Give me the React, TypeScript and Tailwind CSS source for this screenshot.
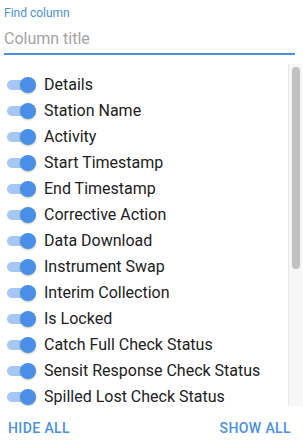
const columns = [
  'Details',
  'Station Name',
  'Activity',
  'Start Timestamp',
  'End Timestamp',
  'Corrective Action',
  'Data Download',
  'Instrument Swap',
  'Interim Collection',
  'Is Locked',
  'Catch Full Check Status',
  'Sensit Response Check Status',
  'Spilled Lost Check Status',
];

function Toggle() {
  return (
    <span className="relative flex h-[24px] w-[40px] shrink-0 items-center">
      <span className="ml-[7px] h-[10px] w-[26px] rounded-full bg-[#a5c7f2]" />
      <span className="absolute left-[20px] top-[4px] h-[16px] w-[16px] rounded-full bg-[#4a8fe7] shadow-[0_1px_2px_rgba(0,0,0,0.25)]" />
    </span>
  );
}

export default function App() {
  return (
    <div
      className="flex h-[444px] w-[303px] flex-col bg-white"
      style={{ fontFamily: 'Roboto, "Liberation Sans", sans-serif' }}
    >
      <div className="px-[4px] pt-[7px]">
        <div className="h-[12px] text-[12px] leading-[12px] text-[#4a90e2]">Find column</div>
        <div className="mt-[8px] w-[291px] border-b-2 border-[#4a90e2] pb-[2px]">
          <input
            placeholder="Column title"
            className="h-[23px] w-full bg-transparent text-[16px] leading-[23px] text-[#212121] outline-none placeholder:text-[#a3a3a3]"
          />
        </div>
      </div>

      <div className="mt-[9px] flex h-[342px] w-full">
        <div className="flex-1 overflow-hidden pt-[8px]">
          {columns.map((c) => (
            <label key={c} className="flex h-[26px] items-center">
              <Toggle />
              <span className="ml-[4px] whitespace-nowrap text-[16px] leading-[18px] text-[#212121]">{c}</span>
            </label>
          ))}
        </div>
        <div className="w-[15px] border-l border-[#e8e8e8] bg-[#f7f7f7] pt-[3px]">
          <div className="mx-auto h-[202px] w-[8px] rounded-full bg-[#c1c1c1]" />
        </div>
      </div>

      <div className="flex h-[39px] items-center justify-between pl-[8px] pr-[12px] pt-[7px]">
        <button className="text-[14px] font-medium uppercase tracking-[0.4px] text-[#4a90e2]">Hide all</button>
        <button className="text-[14px] font-medium uppercase tracking-[0.4px] text-[#4a90e2]">Show all</button>
      </div>
    </div>
  );
}
